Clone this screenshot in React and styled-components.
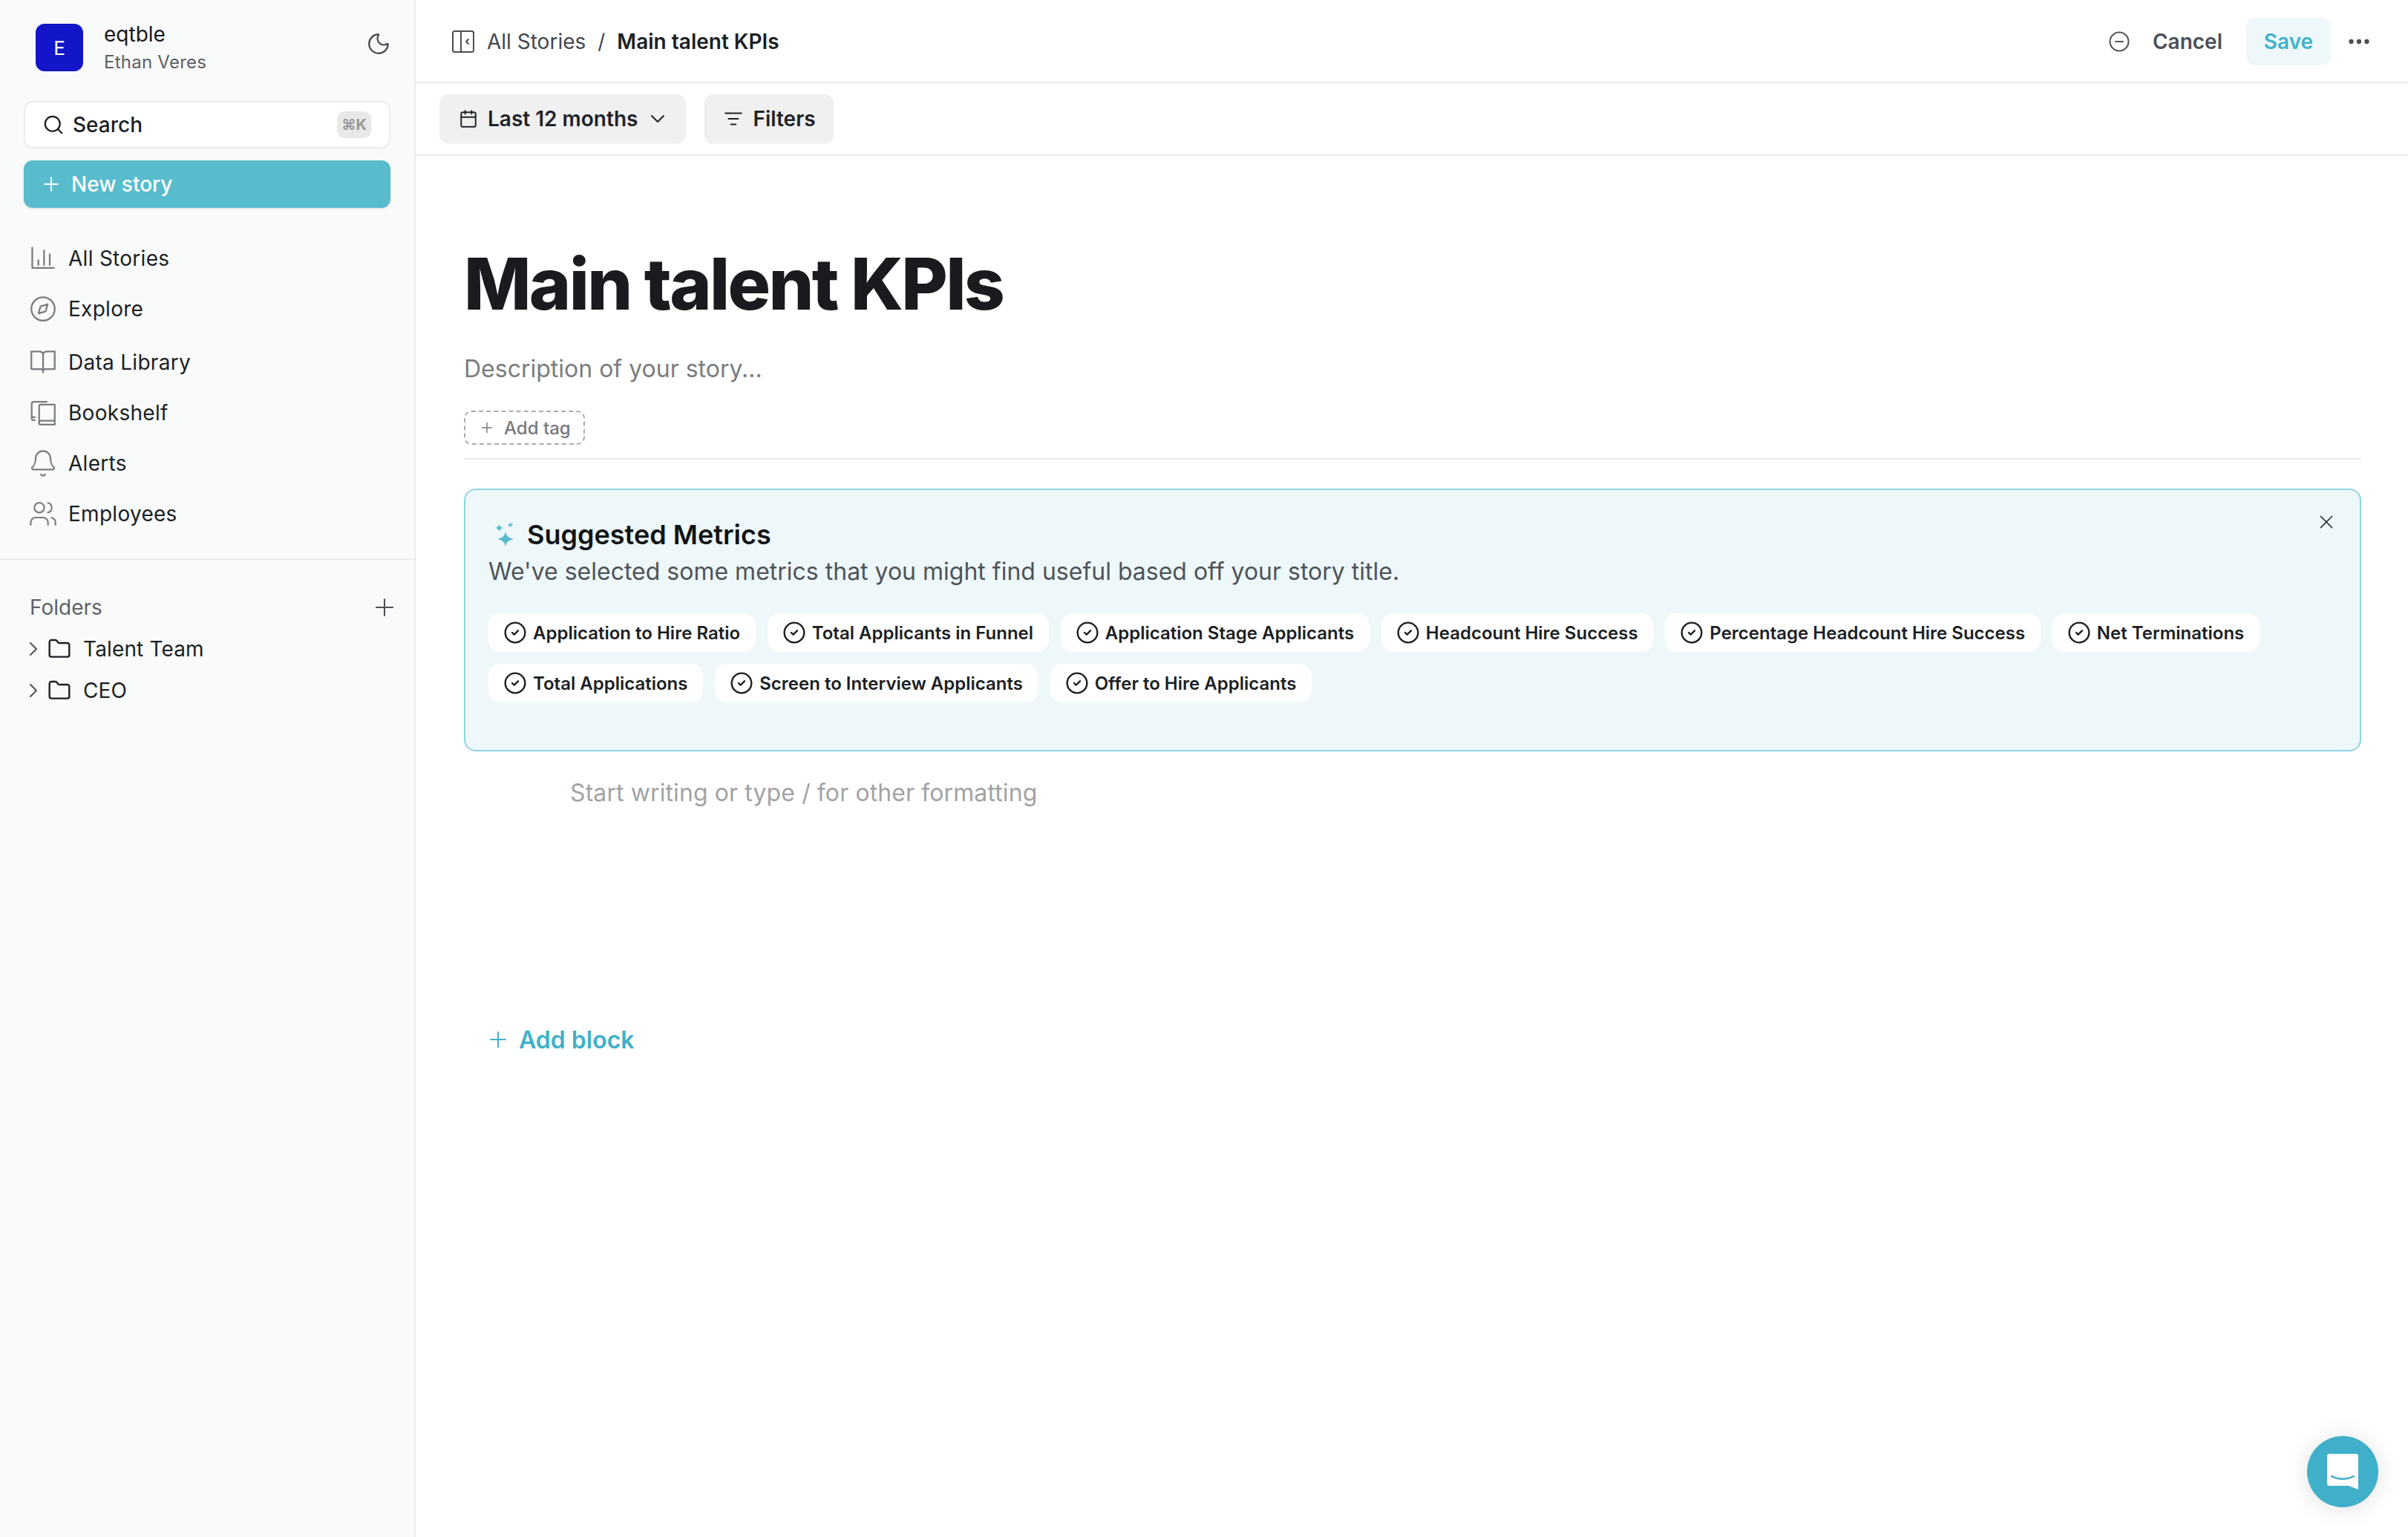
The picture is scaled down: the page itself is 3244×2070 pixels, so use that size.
import React from "react";
import styled, { createGlobalStyle } from "styled-components";
import {
  Bell, ChevronDown, ChevronRight, CircleCheck, CircleMinus, Ellipsis,
  Folder, Moon, Plus, Search, Users, X, Calendar, ListFilter,
} from "lucide-react";

const Global = createGlobalStyle`
  html, body { margin: 0; padding: 0; height: 100%; background: #fff; }
  body { font-family: Inter, "Liberation Sans", sans-serif; color: #1c1f24; overflow: hidden; }
  * { box-sizing: border-box; }
`;

const Page = styled.div`
  display: flex;
  width: 3244px;
  height: 2070px;
  overflow: hidden;
  position: relative;
`;

const Sidebar = styled.aside`
  width: 560px;
  flex: none;
  background: #f9fafa;
  border-right: 2px solid #ececec;
  display: flex;
  flex-direction: column;
`;
const Account = styled.div`
  display: flex;
  align-items: center;
  height: 64px;
  margin: 32px 0 40px 48px;
  padding-right: 31px;
`;
const Avatar = styled.div`
  width: 64px;
  height: 64px;
  border-radius: 12px;
  background: #1216c8;
  color: #fff;
  font-size: 26px;
  display: flex;
  align-items: center;
  justify-content: center;
  margin-right: 28px;
`;
const AccountText = styled.div`
  flex: 1;
  display: flex;
  flex-direction: column;
  gap: 6px;
`;
const AccountName = styled.div`
  font-size: 28px;
  line-height: 34px;
  color: #16181c;
`;
const AccountUser = styled.div`
  font-size: 24px;
  line-height: 30px;
  letter-spacing: 0.01em;
  color: #5d6064;
`;
const MoonIcon = styled(Moon)`
  width: 34px;
  height: 34px;
  margin-bottom: 10px;
  color: #4b4f56;
`;
const SearchBox = styled.div`
  margin: 0 32px;
  height: 64px;
  background: #fff;
  border: 2px solid #ececec;
  border-radius: 12px;
  display: flex;
  align-items: center;
  padding: 0 24px 0 23px;
  font-size: 28px;
  font-weight: 500;
  gap: 11px;
`;
const SearchLabel = styled.span`
  flex: 1;
`;
const Kbd = styled.span`
  width: 46px;
  height: 36px;
  border-radius: 10px;
  background: #e8e8e8;
  color: #9a9a9a;
  font-size: 20px;
  font-weight: 700;
  display: flex;
  align-items: center;
  justify-content: center;
`;
const NewStory = styled.div`
  margin: 16px 32px 0;
  height: 64px;
  border-radius: 12px;
  background: #58bccd;
  color: #fff;
  font-size: 28px;
  font-weight: 500;
  display: flex;
  align-items: center;
  padding-left: 22px;
  gap: 12px;
  box-shadow: 0 1px 3px rgba(0,0,0,.12);
`;
const Nav = styled.nav`
  margin-top: 34px;
  display: flex;
  flex-direction: column;
  padding-bottom: 26px;
  border-bottom: 2px solid #ececec;
`;
const NavRow = styled.div`
  height: 68px;
  margin-top: ${(p) => p.$push}px;
  display: flex;
  align-items: center;
  padding-left: 40px;
  gap: 16px;
  font-size: 28px;
  letter-spacing: 0.01em;
  color: #1c1f24;
  svg {
    width: ${(p) => p.$icon}px;
    height: ${(p) => p.$icon}px;
    margin: 0 ${(p) => (36 - p.$icon) / 2}px;
    color: #7a7c7f;
    flex: none;
  }
`;
const FoldersHead = styled.div`
  display: flex;
  align-items: center;
  justify-content: space-between;
  height: 40px;
  margin: 44px 21px 0 40px;
  font-size: 28px;
  color: #5f6266;
  svg { width: 38px; height: 38px; color: #4e5157; }
`;
const FolderRow = styled.div`
  height: 56px;
  display: flex;
  align-items: center;
  padding-left: 29px;
  font-size: 28px;
  letter-spacing: 0.005em;
  color: #1c1f24;
`;
const FolderList = styled.div`
  margin-top: 8px;
`;
const Chevron = styled(ChevronRight)`
  width: 32px;
  height: 32px;
  color: #4e5157;
  margin-right: 3px;
`;
const FolderIcon = styled(Folder)`
  width: 32px;
  height: 32px;
  color: #1c1f24;
  margin-right: 16px;
`;

const Main = styled.main`
  flex: 1;
  min-width: 0;
  display: flex;
  flex-direction: column;
`;
const TopBar = styled.header`
  height: 112px;
  flex: none;
  border-bottom: 2px solid #ececec;
  display: flex;
  align-items: center;
  padding: 2px 48px 0 48px;
`;
const Crumb = styled.span`
  font-size: 28px;
  color: ${(p) => (p.$current ? "#1c1f24" : "#43474d")};
  font-weight: ${(p) => (p.$current ? 600 : 400)};
`;
const Slash = styled.span`
  font-size: 28px;
  color: #43474d;
  margin: 0 16px;
`;
const PanelIcon = styled.svg`
  width: 32px;
  height: 32px;
  margin-right: 16px;
  color: #4b4f56;
`;
const Spacer = styled.div`
  flex: 1;
`;
const CancelIcon = styled(CircleMinus)`
  width: 30px;
  height: 30px;
  color: #55585d;
  margin-right: 30px;
`;
const Cancel = styled.span`
  font-size: 28px;
  font-weight: 600;
  color: #4b5057;
  margin-right: 32px;
`;
const Save = styled.div`
  width: 114px;
  height: 64px;
  border-radius: 12px;
  background: #eef8fb;
  color: #3fb1c9;
  font-size: 28px;
  font-weight: 600;
  display: flex;
  align-items: center;
  justify-content: center;
  margin-right: 20px;
`;
const Dots = styled(Ellipsis)`
  width: 36px;
  height: 36px;
  color: #4b4f56;
`;
const ToolBar = styled.div`
  height: 98px;
  flex: none;
  border-bottom: 2px solid #ececec;
  display: flex;
  align-items: center;
  padding: 0 0 0 32px;
  gap: 25px;
`;
const ToolButton = styled.div`
  height: 66px;
  border-radius: 12px;
  background: #f0f0f0;
  display: flex;
  align-items: center;
  padding: 0 24px 0 26px;
  font-size: 28px;
  font-weight: 600;
  color: #1f2329;
  box-shadow: 0 1px 2px rgba(0,0,0,.04);
`;
const ToolIcon = styled.span`
  display: flex;
  margin-right: 13px;
  svg { width: 26px; height: 26px; }
`;
const ToolCaret = styled(ChevronDown)`
  width: 32px;
  height: 32px;
  margin: 0 -2px 0 11px;
`;
const Content = styled.div`
  padding: 0 63px 0 65px;
`;
const Title = styled.h1`
  margin: 107px 0 0;
  font-size: 96px;
  line-height: 130px;
  font-weight: 800;
  letter-spacing: -0.028em;
  color: #191b1f;
`;
const Description = styled.div`
  margin-top: 28px;
  font-size: 32px;
  line-height: 44px;
  color: #7a7d80;
`;
const AddTag = styled.div`
  margin-top: 34px;
  width: 163px;
  height: 46px;
  border: 2px dashed #aaa;
  border-radius: 10px;
  display: flex;
  align-items: center;
  padding-left: 18px;
  gap: 12px;
  font-size: 24px;
  font-weight: 500;
  color: #77797c;
  svg { width: 22px; height: 22px; }
`;
const Rule = styled.div`
  margin-top: 18px;
  height: 2px;
  background: #ececec;
`;
const Panel = styled.section`
  position: relative;
  margin-top: 39px;
  height: 354px;
  background: #eef8fb;
  border: 2px solid #90d4df;
  border-radius: 16px;
  padding: 40px 31px 0;
`;
const PanelTitle = styled.div`
  display: flex;
  align-items: center;
  height: 40px;
  padding-left: 8px;
  font-size: 36px;
  font-weight: 600;
  color: #121416;
  gap: 16px;
`;
const PanelSub = styled.div`
  margin-top: 10px;
  font-size: 32px;
  line-height: 40px;
  color: #4f5358;
`;
const Chips = styled.div`
  margin-top: 36px;
  display: flex;
  flex-wrap: wrap;
  gap: 16px;
`;
const Chip = styled.div`
  height: 52px;
  border-radius: 16px;
  background: #fff;
  display: flex;
  align-items: center;
  padding: 0 20.7px 0 20px;
  gap: 8px;
  font-size: 24px;
  font-weight: 600;
  color: #1c1f24;
  svg { width: 32px; height: 32px; }
`;
const Close = styled(X)`
  position: absolute;
  top: 28px;
  right: 30px;
  width: 30px;
  height: 30px;
  color: #2a2d32;
`;
const Placeholder = styled.div`
  margin: 34px 0 0 143px;
  font-size: 32px;
  line-height: 44px;
  letter-spacing: 0.1px;
  color: #a3a3a3;
`;
const AddBlock = styled.div`
  margin: 288px 0 0 29px;
  display: flex;
  align-items: center;
  height: 44px;
  gap: 11px;
  font-size: 32px;
  font-weight: 600;
  color: #3fb1c9;
  svg { width: 34px; height: 34px; }
`;
const ChatBubble = styled.div`
  position: absolute;
  left: 3108px;
  top: 1934px;
  width: 96px;
  height: 96px;
  border-radius: 50%;
  background: #40b0ca;
  display: flex;
  align-items: center;
  justify-content: center;
  box-shadow: 0 2px 32px rgba(0,0,0,.12);
`;

const stroke = { fill: "none", stroke: "currentColor", strokeWidth: 2, strokeLinecap: "round", strokeLinejoin: "round" };

const ChartIcon = () => (
  <svg viewBox="0 0 32 32" {...stroke}>
    <path d="M3.100 3v24.500h26M10.400 18v6M17.200 6.500v17.500M24 11v13" />
  </svg>
);
const CompassIcon = () => (
  <svg viewBox="0 0 32 32" {...stroke}>
    <circle cx="16" cy="16" r="14" />
    <path d="M21.500 10.500l-2.500 8.500-8.500 2.500 2.500-8.500z" />
  </svg>
);
const BookIcon = () => (
  <svg viewBox="0 0 32 32" {...stroke}>
    <path d="M2 3h9c3 0 5 1.500 5 4 0-2.500 2-4 5-4h9v21H19c-2 0-3 1-3 2.500 0-1.500-1-2.500-3-2.500H2zM16 7v21" />
  </svg>
);
const ShelfIcon = () => (
  <svg viewBox="0 0 32 32" {...stroke}>
    <path d="M20.400 2.700H5a2.600 2.600 0 0 0-2.600 2.600V23M2.400 23a1.800 1.800 0 0 0 1.800 1.800h2M2.400 23a1.800 1.800 0 0 1 1.800-1.800h2" />
    <path d="M13.300 6.200H30v24H13.300a2 2 0 0 1-2-2V8.200a2 2 0 0 1 2-2zM11.300 27.500a2.200 2.200 0 0 1 2.200-2.100H30" />
  </svg>
);
const Sparkle = () => (
  <svg width="28" height="34" viewBox="0 0 28 34" fill="#58bccd">
    <path d="M15 12.500c1 6 3 8.500 11 10.500-8 2-10 4.500-11 10.500-1-6-3-8.500-11-10.500 8-2 10-4.500 11-10.500z" />
    <path d="M6.500 2.500c.5 3 1.500 4.500 5.500 5.500-4 1-5 2.500-5.500 5.500C6 10.500 5 9 1 8c4-1 5-2.500 5.500-5.500z" />
    <path d="M21.500 0c.4 2.300 1 3.200 4 4-3 .8-3.600 1.700-4 4-.4-2.300-1-3.200-4-4 3-.8 3.600-1.700 4-4z" />
  </svg>
);

const nav = [
  { label: "All Stories", icon: <ChartIcon />, size: 36, push: 0 },
  { label: "Explore", icon: <CompassIcon />, size: 36, push: 0 },
  { label: "Data Library", icon: <BookIcon />, size: 36, push: 4 },
  { label: "Bookshelf", icon: <ShelfIcon />, size: 36, push: 0 },
  { label: "Alerts", icon: <Bell strokeWidth={1.3} />, size: 40, push: 0 },
  { label: "Employees", icon: <Users strokeWidth={1.3} />, size: 40, push: 0 },
];
const metrics = [
  "Application to Hire Ratio", "Total Applicants in Funnel", "Application Stage Applicants",
  "Headcount Hire Success", "Percentage Headcount Hire Success", "Net Terminations",
  "Total Applications", "Screen to Interview Applicants", "Offer to Hire Applicants",
];

export default function App() {
  return (
    <Page>
      <Global />
      <Sidebar>
        <Account>
          <Avatar>E</Avatar>
          <AccountText>
            <AccountName>eqtble</AccountName>
            <AccountUser>Ethan Veres</AccountUser>
          </AccountText>
          <MoonIcon strokeWidth={1.7} />
        </Account>
        <SearchBox>
          <Search size={30} strokeWidth={1.8} />
          <SearchLabel>Search</SearchLabel>
          <Kbd>⌘K</Kbd>
        </SearchBox>
        <NewStory><Plus size={30} strokeWidth={1.6} />New story</NewStory>
        <Nav>
          {nav.map((n) => (
            <NavRow key={n.label} $icon={n.size} $push={n.push}>{n.icon}{n.label}</NavRow>
          ))}
        </Nav>
        <FoldersHead>Folders<Plus strokeWidth={1.3} /></FoldersHead>
        <FolderList>
          {["Talent Team", "CEO"].map((f) => (
            <FolderRow key={f}><Chevron strokeWidth={1.5} /><FolderIcon strokeWidth={1.8} />{f}</FolderRow>
          ))}
        </FolderList>
      </Sidebar>
      <Main>
        <TopBar>
          <PanelIcon viewBox="0 0 32 32" {...stroke}>
            <rect x="2" y="2" width="28" height="28" rx="2.500" />
            <path d="M13 2v28M23 13l-3 3 3 3" />
          </PanelIcon>
          <Crumb>All Stories</Crumb>
          <Slash>/</Slash>
          <Crumb $current>Main talent KPIs</Crumb>
          <Spacer />
          <CancelIcon strokeWidth={1.7} />
          <Cancel>Cancel</Cancel>
          <Save>Save</Save>
          <Dots strokeWidth={2.2} />
        </TopBar>
        <ToolBar>
          <ToolButton>
            <ToolIcon><Calendar strokeWidth={1.8} /></ToolIcon>
            Last 12 months
            <ToolCaret strokeWidth={1.5} />
          </ToolButton>
          <ToolButton>
            <ToolIcon><ListFilter strokeWidth={1.8} /></ToolIcon>
            Filters
          </ToolButton>
        </ToolBar>
        <Content>
          <Title>Main talent KPIs</Title>
          <Description>Description of your story...</Description>
          <AddTag><Plus strokeWidth={1.6} />Add tag</AddTag>
          <Rule />
          <Panel>
            <Close strokeWidth={1.4} />
            <PanelTitle><Sparkle />Suggested Metrics</PanelTitle>
            <PanelSub>We've selected some metrics that you might find useful based off your story title.</PanelSub>
            <Chips>
              {metrics.map((m) => <Chip key={m}><CircleCheck strokeWidth={1.8} />{m}</Chip>)}
            </Chips>
          </Panel>
          <Placeholder>Start writing or type / for other formatting</Placeholder>
          <AddBlock><Plus strokeWidth={1.4} />Add block</AddBlock>
        </Content>
      </Main>
      <ChatBubble>
        <svg width="44" height="48" viewBox="0 0 44 48">
          <path fill="#fff" d="M4 0h36a3 3 0 0 1 3 3v45l-13-5H4a3 3 0 0 1-3-3V3a3 3 0 0 1 3-3z" />
          <path fill="none" stroke="#40b0ca" strokeWidth="2.500" strokeLinecap="round" d="M7 30c9 5 21 5 30 0" />
        </svg>
      </ChatBubble>
    </Page>
  );
}
